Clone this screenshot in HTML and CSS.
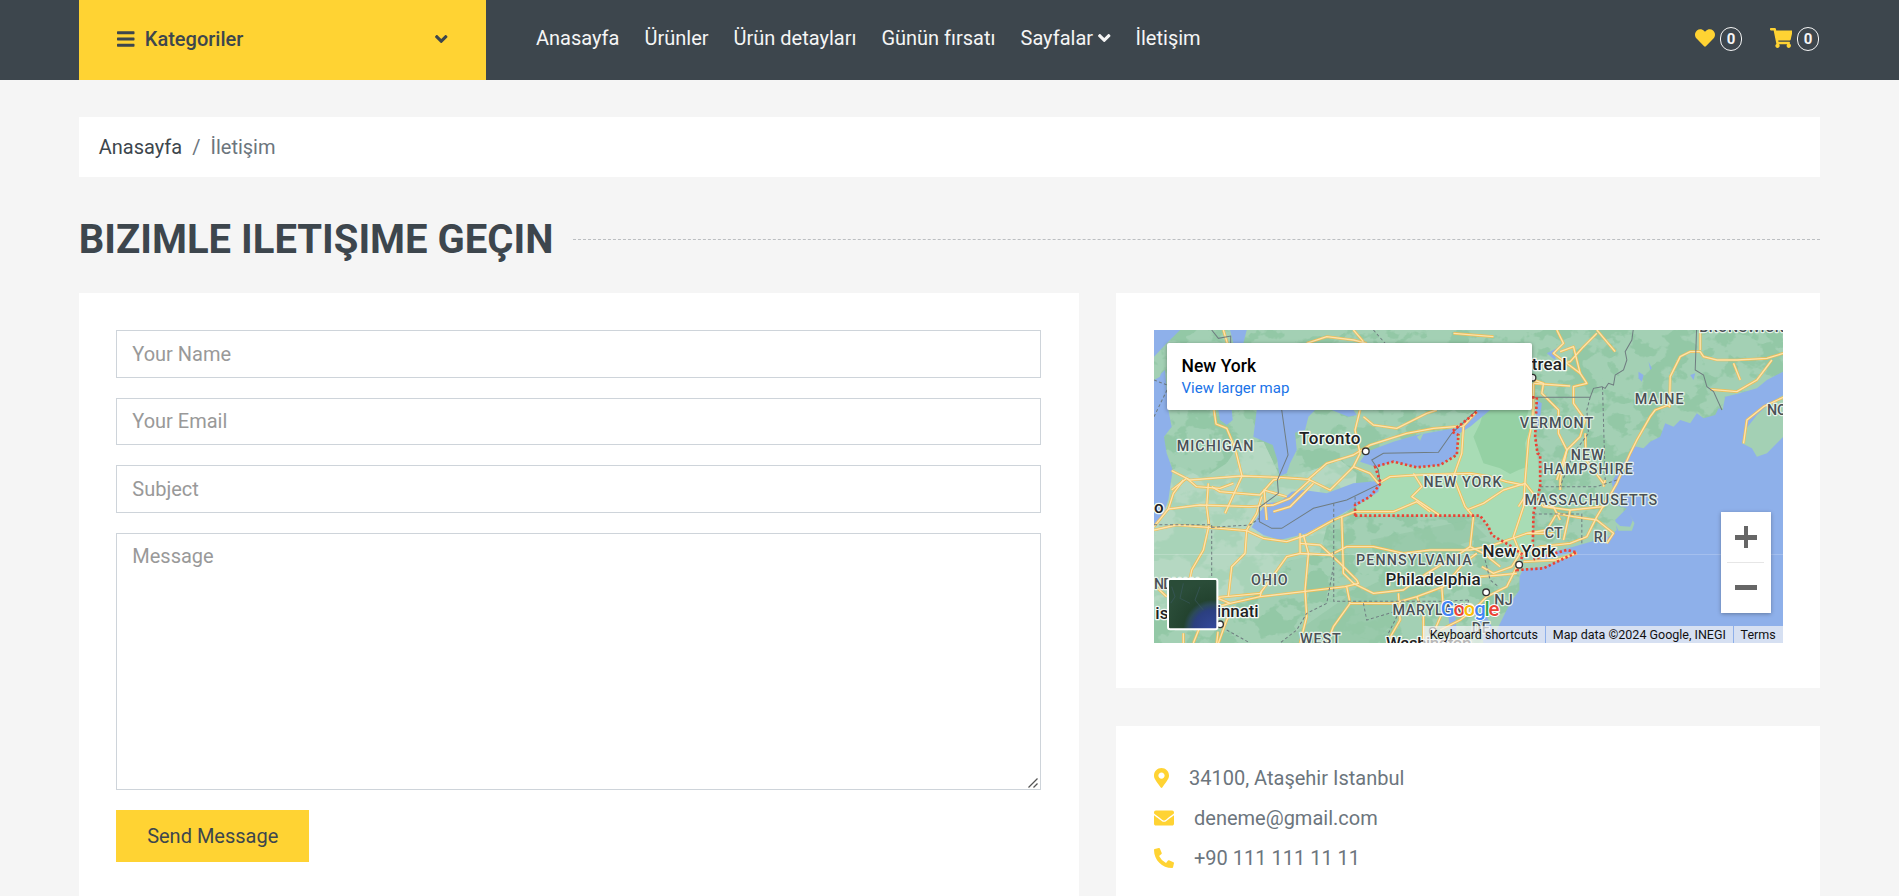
FILE: index.html
```html
<!DOCTYPE html>
<html lang="en">
<head>
<meta charset="utf-8">
<title>İletişim</title>
<link rel="stylesheet" href="styles.css">
</head>
<body>
<header class="topbar">
  <a class="categories">
    <span class="categories-label">
      <svg class="icon icon-bars" viewBox="0 0 448 512"><path d="M16 132h416c8.8 0 16-7.2 16-16V76c0-8.800-7.200-16-16-16H16C7.200 60 0 67.200 0 76v40c0 8.800 7.200 16 16 16zm0 160h416c8.800 0 16-7.200 16-16v-40c0-8.800-7.200-16-16-16H16c-8.800 0-16 7.200-16 16v40c0 8.800 7.200 16 16 16zm0 160h416c8.800 0 16-7.200 16-16v-40c0-8.800-7.200-16-16-16H16c-8.800 0-16 7.200-16 16v40c0 8.800 7.200 16 16 16z"/></svg>
      Kategoriler
    </span>
    <svg class="icon icon-angle" viewBox="0 0 320 512"><path d="M143 352.300L7 216.300c-9.400-9.400-9.400-24.600 0-33.900l22.600-22.600c9.400-9.400 24.600-9.400 33.900 0l96.400 96.400 96.400-96.400c9.400-9.400 24.600-9.400 33.900 0l22.600 22.600c9.400 9.400 9.400 24.600 0 33.900l-136 136c-9.200 9.400-24.400 9.400-33.800 0z"/></svg>
  </a>
  <nav class="menu">
    <a>Anasayfa</a>
    <a>Ürünler</a>
    <a>Ürün detayları</a>
    <a>Günün fırsatı</a>
    <a>Sayfalar <svg class="icon icon-angle-nav" viewBox="0 0 320 512"><path d="M143 352.300L7 216.300c-9.400-9.400-9.400-24.600 0-33.900l22.600-22.600c9.400-9.400 24.600-9.400 33.900 0l96.400 96.400 96.400-96.400c9.400-9.400 24.600-9.400 33.900 0l22.600 22.600c9.400 9.400 9.400 24.600 0 33.900l-136 136c-9.200 9.400-24.400 9.400-33.800 0z"/></svg></a>
    <a>İletişim</a>
  </nav>
  <div class="counters">
    <a class="counter">
      <svg class="icon icon-heart" viewBox="0 0 512 512"><path d="M462.300 62.600C407.500 15.900 326 24.300 275.700 76.200L256 96.500l-19.700-20.300C186.100 24.300 104.500 15.900 49.700 62.600c-62.800 53.600-66.100 149.800-9.900 207.900l193.500 199.800c12.500 12.900 32.800 12.900 45.300 0l193.500-199.800c56.300-58.100 53-154.300-9.800-207.900z"/></svg>
      <span class="count">0</span>
    </a>
    <a class="counter">
      <svg class="icon icon-cart" viewBox="0 0 576 512"><path d="M528.120 301.319l47.273-208C578.806 78.301 567.391 64 551.990 64H159.208l-9.166-44.810C147.758 8.021 137.930 0 126.529 0H24C10.745 0 0 10.745 0 24v16c0 13.255 10.745 24 24 24h69.883l70.248 343.435C147.325 417.100 136 435.222 136 456c0 30.928 25.072 56 56 56s56-25.072 56-56c0-15.674-6.447-29.835-16.824-40h209.647C430.447 426.165 424 440.326 424 456c0 30.928 25.072 56 56 56s56-25.072 56-56c0-22.172-12.888-41.332-31.579-50.405l5.517-24.276c3.413-15.018-8.002-29.319-23.403-29.319H218.117l-6.545-32h293.145c11.206 0 20.920-7.754 23.403-18.681z"/></svg>
      <span class="count">0</span>
    </a>
  </div>
</header>

<main class="page">
  <nav class="breadcrumb"><a>Anasayfa</a><span class="slash">/</span><span>İletişim</span></nav>
  <h2 class="title"><span>Bizimle Iletişime Geçin</span></h2>

  <div class="columns">
    <form class="card form">
      <input class="field" type="text" placeholder="Your Name">
      <input class="field" type="email" placeholder="Your Email">
      <input class="field" type="text" placeholder="Subject">
      <div class="message-box">
        <textarea class="field message" placeholder="Message"></textarea>
        <svg class="grip" viewBox="0 0 10 10"><path d="M.5 9.500L9.500.5M5.500 9.500L9.500 5.500"/></svg>
      </div>
      <button class="send" type="button">Send Message</button>
    </form>

    <div class="side">
      <section class="card map-card">
        <div class="map">
          <svg class="map-canvas" viewBox="42 30 1887 939" preserveAspectRatio="none">
            <defs>
              <filter id="hills" x="0" y="0" width="1" height="1" color-interpolation-filters="sRGB">
                <feTurbulence type="fractalNoise" baseFrequency="0.014 0.018" numOctaves="4" seed="8"/>
                <feColorMatrix values="0 0 0 0 .576  0 0 0 0 .784  0 0 0 0 .651  14 0 0 0 -6.900"/>
              </filter>
              <filter id="plains" x="0" y="0" width="1" height="1" color-interpolation-filters="sRGB">
                <feTurbulence type="fractalNoise" baseFrequency="0.010 0.014" numOctaves="4" seed="21"/>
                <feColorMatrix values="0 0 0 0 .710  0 0 0 0 .847  0 0 0 0 .760  0 14 0 0 -6.600"/>
              </filter>
              <clipPath id="lowland"><path d="M42 470L120 440L190 475L260 430L300 370L370 365L420 470L520 450L600 420L650 460L640 560L560 620L540 700L420 730L390 800L300 850L180 830L120 900L42 880z"/></clipPath>
              <radialGradient id="sat" cx=".9" cy="1" r=".95"><stop offset="0" stop-color="#33489a"/><stop offset=".4" stop-color="#2b3f80"/><stop offset=".52" stop-color="#2c4a58"/><stop offset=".62" stop-color="#23432f"/><stop offset="1" stop-color="#2a4c38"/></radialGradient>
              <g id="roads">
                <path d="M222 270L228 312L260 325L285 385L306 468L255 580"/>
                <path d="M95 452L140 475L150 480L306 468L420 472L505 478L560 430L640 405L690 375L800 340L880 325L970 318L1010 275"/>
                <path d="M95 510L140 475L170 500L240 505L280 490"/>
                <path d="M130 480L100 520L85 567L42 620"/>
                <path d="M85 567L180 555L330 560L400 555L450 535L510 480"/>
                <path d="M205 490L200 560L207 615L190 690L155 750L150 775"/>
                <path d="M215 500L240 515L300 520L360 525L400 480L420 475"/>
                <path d="M365 530L350 580L320 630L315 700L275 740L265 830"/>
                <path d="M42 630L110 615L205 622L320 632L370 655L440 665L500 645L580 600L645 575L760 575L830 545L870 575"/>
                <path d="M400 575L450 560L500 510L520 490"/>
                <path d="M505 478L570 510L600 480L640 440L660 400L645 330L660 270"/>
                <path d="M670 290L700 315L770 325L860 280L890 270"/>
                <path d="M640 440L690 460L715 490L750 470L830 465L990 460L1050 470L1100 485L1150 495"/>
                <path d="M820 460L845 500L815 530L860 560L900 587"/>
                <path d="M970 320L965 400L940 470L975 560L1000 590"/>
                <path d="M480 640L480 700L440 710L390 780L360 820L235 832"/>
                <path d="M480 700L570 705L620 680L700 680L790 700L870 690L990 690L1060 675L1160 640L1240 640"/>
                <path d="M480 670L540 675L600 730L650 780L655 790L615 800L490 815L360 830L270 850L234 835"/>
                <path d="M490 645L505 700L495 810L500 890L480 969"/>
                <path d="M605 590L610 760L640 790L700 820L790 810L860 760L960 700L990 680"/>
                <path d="M620 800L630 850L580 920L560 969"/>
                <path d="M630 850L760 850L830 830L910 800L970 730L1010 700"/>
                <path d="M775 820L780 900L740 969M830 830L850 880L850 969M905 800L910 870L880 940"/>
                <path d="M270 850L200 870L160 969M360 830L365 812M234 935L230 969M130 940L130 969M42 795L80 830"/>
                <path d="M285 860L260 900L235 970"/>
                <path d="M380 600L372 510L440 530"/>
                <path d="M1130 740L1100 800L1040 830L1000 870L960 900L900 930"/>
                <path d="M1025 740L1060 760L1115 740L1140 700L1120 650L1150 560L1155 480L1165 360L1178 300L1180 190"/>
                <path d="M1000 590L990 680L1030 700L1080 740"/>
                <path d="M980 570L1030 550L1090 510L1155 490L1210 560L1290 570L1390 560L1430 490L1470 400L1490 360L1530 290L1545 270L1585 255L1588 260L1590 170L1620 110L1650 95L1680 95L1690 110L1730 120L1790 120L1880 115L1929 100"/>
                <path d="M1160 640L1220 630L1250 580L1300 590L1370 600L1420 640L1400 670"/>
                <path d="M1140 705L1200 680L1290 670L1340 650L1370 590L1400 540"/>
                <path d="M1290 570L1270 660M1210 560L1240 560L1260 600"/>
                <path d="M1250 480L1280 390L1255 340L1255 270L1205 220L1210 190L1180 180"/>
                <path d="M1280 390L1320 350L1335 300L1300 250L1300 200L1340 190L1320 160L1240 100L1270 70L1250 30"/>
                <path d="M1180 190L1290 198M1210 140L1290 125L1330 80L1370 40M1260 95L1300 80L1320 160M1370 30L1425 95"/>
                <path d="M1280 390L1260 480L1260 510M1335 340L1338 420L1390 490"/>
                <path d="M1680 30L1680 90M1710 208L1790 215L1850 180L1895 120M1780 130L1800 180"/>
                <path d="M1929 232L1870 260L1820 300L1810 370"/>
                <path d="M1150 725L1250 720L1310 700"/>
                <path d="M500 70L560 50L640 60L680 70M640 30L670 65M250 30L262 70M940 40L1060 50"/>
                <path d="M1135 560L1160 520M1130 760L1080 765L1020 770M1390 500L1395 480"/>
              </g>
            </defs>

            <rect x="42" y="30" width="1887" height="939" fill="#a3d0b4"/>
            <rect x="42" y="30" width="1887" height="939" filter="url(#hills)"/>
            <g clip-path="url(#lowland)">
              <rect x="42" y="360" width="620" height="560" fill="#a8d3b8"/>
              <rect x="42" y="360" width="620" height="560" filter="url(#plains)"/>
            </g>
            <path d="M690 660L990 600L1040 650L900 690L700 700zM420 969L620 830L850 720L900 770L700 969z" fill="#94c8a7" opacity=".7"/>
            <path d="M645 587V555L690 530L720 490L705 440L760 425L830 442L900 435L950 405L955 345L1010 290L1060 240L1190 232L1185 350L1190 400L1200 480L1178 580V700L1140 705L1060 650L1045 620L1020 587z" fill="#a8dcb5"/>
            <path d="M1040 240L1170 250L1160 290L1168 330L1155 370L1162 440L1135 450L1110 462L1080 445L1030 430L1015 390L1000 350L1020 310z" fill="#95d1a4"/>

            <g fill="#8eb0ea">
              <path d="M42 30H120L75 75L42 110zM42 180L75 150L85 270L95 320L72 350L80 400L98 450L85 540L70 580L42 615z"/>
              <path d="M235 270H275L278 300L260 315L240 300zM350 270H525L505 290L495 330L465 338L470 390L450 430L440 460L418 468L412 420L398 375L340 350z"/>
              <path d="M575 270H640L650 285L625 290zM270 30H320L310 70H280z"/>
              <path d="M660 425L680 395L760 365L830 345L960 322L1010 270H1050L990 320L950 345L952 400L900 435L830 442L760 424L710 442z"/>
              <path d="M335 622L362 575L375 550L420 545L455 515L490 510L560 520L640 490L722 482L715 515L690 532L645 560L590 590L500 640L420 660L370 645z"/>
              <path d="M355 575L370 590L425 570L440 550L400 560z"/>
              <path d="M1929 155L1880 180L1850 205L1790 222L1755 230L1750 255L1748 270L1735 265L1725 285L1690 295L1670 280L1650 310L1620 300L1600 320L1575 310L1560 350L1530 365L1510 385L1480 378L1455 420L1430 460L1415 485L1420 520L1410 545L1425 555L1460 565L1425 600L1430 630L1405 650L1370 660L1300 680L1240 695L1150 745L1138 770V810L1110 850L1080 910L1050 969H1929z"/>
              <path d="M925 890L945 880L950 940L930 930zM1015 895L1035 880L1070 950L1060 969L1030 969zM1190 240L1205 250L1195 340L1188 300zM840 350L870 340L860 365z"/>
              <path d="M1495 155L1510 165L1505 185L1495 175zM1525 125L1535 145L1530 150zM1650 165L1665 160L1660 180zM1220 100L1250 85L1245 120z"/>
            </g>
            <g fill="#a3d0b4">
              <path d="M1929 225L1890 250L1850 285L1815 330L1805 370L1835 385L1850 410L1880 400L1929 350z"/>
              <path d="M1420 600L1435 632L1475 632L1483 610L1465 580L1478 600L1470 620L1440 618z"/>
              <path d="M1140 750L1150 730L1230 715L1310 692L1290 710L1210 740z"/>
              <path d="M42 140L70 130L60 170L42 180zM830 350L850 340L840 362z"/>
            </g>

            <use href="#roads" class="road-case"/>
            <use href="#roads" class="road-core"/>

            <g class="border">
              <path d="M215 30L235 55L272 48V70M425 270L444 405L412 480L415 520L358 562V605L395 625H425L520 565L620 540L722 490M720 490L715 450L695 420L730 400L895 397L935 340L1010 270"/>
              <path d="M1176 232H1350L1360 205L1385 200L1395 205L1405 190L1420 195L1425 165L1450 150L1460 120L1455 95L1475 60L1479 30M1669 30L1665 150L1690 165L1700 200L1720 215L1745 270"/>
            </g>
            <g class="border dashed">
              <path d="M42 614H210M215 615V775M215 622L330 615L358 595M581 550V844H900L990 840M645 587V530M42 180L81 195M42 290L81 210M700 30L735 70"/>
              <path d="M580 740L560 850L500 880L470 930L420 969M260 930L330 969M670 850L680 900L780 870L740 950M1350 232L1340 270L1345 340L1300 400L1260 500M1387 200L1395 480M1200 500H1370L1430 480M1180 582H1325V670M1035 720L1050 780L1075 800M985 840L980 880"/>
            </g>
            <g class="state-line">
              <path d="M645 587V555L690 530L722 490L705 440L760 425L830 442L900 435L950 405L955 345L935 335L1010 275"/>
              <path d="M645 587H1020L1045 620L1055 645L1115 680L1148 705L1130 750L1210 745L1310 697L1280 690L1180 718M1176 232H1190L1185 350L1192 400L1200 405L1200 500L1180 580L1177 715"/>
            </g>
            <path d="M42 703H1929" stroke="#fff" stroke-width="2" opacity=".35"/>

            <g class="cities-dot"><circle cx="677" cy="394" r="10"/><circle cx="1177" cy="173" r="10"/><circle cx="1137" cy="734" r="10"/><circle cx="1038" cy="817" r="10"/><circle cx="240" cy="913" r="10"/><circle cx="878" cy="933" r="10"/></g>
            <g class="state-name">
              <text x="110" y="394" textLength="230">MICHIGAN</text>
              <text x="850" y="502" textLength="234">NEW YORK</text>
              <text x="1139" y="325" textLength="220">VERMONT</text>
              <text x="1484" y="251" textLength="146">MAINE</text>
              <text x="1292" y="421" textLength="98">NEW</text>
              <text x="1209" y="463" textLength="269">HAMPSHIRE</text>
              <text x="1153" y="555" textLength="398">MASSACHUSETTS</text>
              <text x="1214" y="653" textLength="54">CT</text>
              <text x="1361" y="665" textLength="40">RI</text>
              <text x="648" y="735" textLength="347">PENNSYLVANIA</text>
              <text x="333" y="796" textLength="110">OHIO</text>
              <text x="42" y="808" textLength="145">NDIANA</text>
              <text x="757" y="885" textLength="245">MARYLAND</text>
              <text x="1062" y="856" textLength="56">NJ</text>
              <text x="995" y="939" textLength="54">DE</text>
              <text x="480" y="971" textLength="122">WEST</text>
              <text x="1677" y="37" textLength="254">BRUNSWICK</text>
              <text x="1880" y="286">NOVA</text>
            </g>
            <g class="city-name">
              <text x="477" y="372" textLength="184">Toronto</text>
              <text x="1175" y="150" textLength="104">treal</text>
              <text x="1027" y="711" textLength="221">New York</text>
              <text x="736" y="796" textLength="286">Philadelphia</text>
              <text x="230" y="892" textLength="126">innati</text>
              <text x="46" y="897">is</text>
              <text x="42" y="580">o</text>
              <text x="738" y="988" textLength="256">Washington</text>
            </g>
            <text class="google" x="902" y="889" textLength="176"><tspan fill="#4285f4">G</tspan><tspan fill="#ea4335">o</tspan><tspan fill="#fbbc05">o</tspan><tspan fill="#4285f4">g</tspan><tspan fill="#34a853">l</tspan><tspan fill="#ea4335">e</tspan></text>
            <g class="satellite">
              <rect x="84" y="777" width="148" height="151" rx="6" fill="url(#sat)" stroke="#fff" stroke-width="6"/>
              <path d="M95 800L105 830L92 850M130 790L120 835L150 850M180 800L165 840L190 870" fill="none" stroke="#3c5a63" stroke-width="3" opacity=".6"/>
            </g>
          </svg>
          <div class="place"><strong>New York</strong><a>View larger map</a></div>
          <div class="zoom"><i class="plus"></i><i class="minus"></i></div>
          <div class="legal"><span>Keyboard shortcuts</span><span>Map data ©2024 Google, INEGI</span><span>Terms</span></div>
        </div>
      </section>

      <section class="card contact">
        <p><svg class="icon icon-pin" viewBox="0 0 384 512"><path d="M172.268 501.670C26.970 291.031 0 269.413 0 192 0 85.961 85.961 0 192 0s192 85.961 192 192c0 77.413-26.970 99.031-172.268 309.670-9.535 13.774-29.930 13.773-39.464 0zM192 272c44.183 0 80-35.817 80-80s-35.817-80-80-80-80 35.817-80 80 35.817 80 80 80z"/></svg>34100, Ataşehir Istanbul</p>
        <p><svg class="icon icon-wide" viewBox="0 0 512 512"><path d="M502.300 190.800c3.900-3.100 9.700-.2 9.700 4.700V400c0 26.500-21.500 48-48 48H48c-26.500 0-48-21.500-48-48V195.600c0-5 5.700-7.800 9.700-4.700 22.400 17.400 52.100 39.500 154.100 113.600 21.100 15.400 56.700 47.800 92.200 47.600 35.700.3 72-32.800 92.300-47.600 102-74.100 131.600-96.300 154-113.700zM256 320c23.200.4 56.600-29.200 73.400-41.400 132.700-96.300 142.800-104.700 173.400-128.700 5.800-4.500 9.200-11.500 9.200-18.900v-19c0-26.500-21.500-48-48-48H48c-26.500 0-48 21.500-48 48v19c0 7.400 3.400 14.300 9.200 18.900 30.600 23.900 40.700 32.400 173.400 128.700 16.800 12.200 50.200 41.800 73.400 41.400z"/></svg>deneme@gmail.com</p>
        <p><svg class="icon icon-wide" viewBox="0 0 512 512"><path d="M497.390 361.800l-112-48a24 24 0 0 0-28 6.900l-49.600 60.600A370.660 370.660 0 0 1 130.600 204.110l60.600-49.600a23.940 23.940 0 0 0 6.900-28l-48-112A24.160 24.160 0 0 0 122.600.61l-104 24A24 24 0 0 0 0 48c0 256.500 207.900 464 464 464a24 24 0 0 0 23.400-18.600l24-104a24.290 24.290 0 0 0-14.010-27.600z"/></svg>+90 111 111 11 11</p>
      </section>
    </div>
  </div>
</main>
</body>
</html>
```
FILE: styles.css
```css
* { box-sizing: border-box; }

html { height: 100%; overflow: hidden; }

body {
  display: flex;
  flex-direction: column;
  margin: 0;
  height: 100%;
  overflow: hidden;
  background: #f5f5f5;
  color: #6c757d;
  font: 400 20px/30px Roboto, "Liberation Sans", sans-serif;
}

.icon { display: block; flex: none; fill: currentColor; }

/* Top bar */
.topbar {
  display: flex;
  flex: none;
  height: 80px;
  padding: 0 78.75px;
  background: #3d464d;
}

.categories {
  display: flex;
  align-items: center;
  justify-content: space-between;
  width: 407.25px;
  padding: 0 38.5px 2px;
  background: #ffd333;
  color: #3d464d;
  font-weight: 500;
}

.categories-label { display: flex; align-items: center; gap: 10px; line-height: 24px; }
.icon-bars { width: 17.5px; height: 20px; }
.categories .icon-angle { width: 12.5px; height: 20px; }

.menu { display: flex; flex: 1; align-items: center; padding: 0 0 4px 37.5px; color: #f5f5f5; }
.menu a { display: flex; align-items: center; padding: 0 12.5px; }
.icon-angle-nav { width: 12.5px; height: 20px; margin-left: 5px; }

.counters { display: flex; align-items: center; gap: 27.5px; padding: 0 1.25px 2px 0; }
.counter { display: flex; align-items: center; gap: 5px; color: #ffd333; }
.icon-heart { width: 20px; height: 20px; margin-bottom: 3px; }
.icon-cart { width: 22.5px; height: 20px; margin-bottom: 3px; }

.count {
  width: 22px;
  height: 24px;
  border: 1px solid #f5f5f5;
  border-radius: 12px;
  color: #f5f5f5;
  font-size: 15px;
  font-weight: 700;
  line-height: 23px;
  text-align: center;
}

/* Page */
.page { display: flex; flex: 1; flex-direction: column; min-height: 0; padding: 37px 78.75px 0; }

.breadcrumb { display: flex; flex: none; height: 60px; padding: 15px 20px; background: #fff; }
.breadcrumb a { color: #3d464d; }
.slash { padding: 0 10px; }

.title {
  display: flex;
  align-items: center;
  gap: 20px;
  margin: 38px 0 30px;
  color: #3d464d;
  font-size: 40px;
  font-weight: 700;
  line-height: 48px;
  text-transform: uppercase;
}
.title span { height: 48px; line-height: 50px; }
.title::after { content: ""; flex: 1; border-top: 1px dashed #bcbfc2; }

.columns { display: flex; flex: 1; gap: 37.5px; min-height: 0; }
.card { background: #fff; padding: 37px 37.5px; }

/* Form */
.form { display: flex; flex-direction: column; align-items: flex-start; gap: 20px; width: 999.75px; padding-bottom: 0; }

.field {
  display: block;
  flex: none;
  width: 100%;
  height: 47.5px;
  margin: 0;
  padding: 7.5px 15px;
  border: 1px solid #ced4da;
  border-radius: 0;
  background: #fff;
  font: inherit;
}
.field::placeholder { color: #999; opacity: 1; }
.message-box { position: relative; flex: none; width: 100%; }
.message { height: 257.5px; resize: none; }
.grip { position: absolute; right: 3px; bottom: 2px; width: 10px; height: 10px; fill: none; stroke: #555; stroke-width: 1.3; }

.send {
  flex: none;
  width: 193px;
  height: 52px;
  padding: 0;
  border: 0;
  background: #ffd333;
  color: #3d464d;
  font: inherit;
}

/* Right column */
.side { display: flex; flex: 1; flex-direction: column; gap: 38px; min-width: 0; }
.map-card { flex: none; padding-bottom: 45px; }
.map { position: relative; height: 313px; overflow: hidden; }
.map-canvas { display: block; width: 100%; height: 100%; }

.map-canvas text { font-family: Roboto, sans-serif; paint-order: stroke; stroke-linejoin: round; }
.road-case { fill: none; stroke: #f2bd52; stroke-width: 8; stroke-linejoin: round; }
.road-core { fill: none; stroke: #fbe3ae; stroke-width: 4; stroke-linejoin: round; }
.border { fill: none; stroke: #6f7c80; stroke-width: 3; }
.border.dashed { stroke-dasharray: 9 7; }
.state-line { fill: none; stroke: #ea4335; stroke-width: 8; stroke-dasharray: 7 7; }
.cities-dot { fill: #fff; stroke: #333; stroke-width: 4; }
.state-name { fill: #4a5056; stroke: #e6f3ea; stroke-width: 7; font-size: 43px; font-weight: 500; }
.city-name { fill: #1f2224; stroke: #f3faf5; stroke-width: 8; font-size: 51px; font-weight: 500; }
.google { font-size: 61px; font-weight: 500; stroke: #fff; stroke-width: 6; }

.place {
  position: absolute;
  top: 13px;
  left: 13px;
  display: flex;
  flex-direction: column;
  width: 365px;
  height: 67px;
  padding: 12px 15px;
  border-radius: 2px;
  background: #fff;
  box-shadow: 0 1px 4px rgba(0, 0, 0, .35);
}
.place strong { color: #000; font-size: 17.5px; font-weight: 500; line-height: 22px; }
.place a { color: #1a73e8; font-size: 15px; line-height: 22px; }

.zoom {
  position: absolute;
  right: 12px;
  bottom: 30px;
  display: grid;
  grid-template-rows: 1fr 1fr;
  place-items: center;
  width: 50px;
  height: 101px;
  background: linear-gradient(#e6e6e6, #e6e6e6) center / 37px 1px no-repeat #fff;
  box-shadow: 0 1px 4px rgba(0, 0, 0, .3);
}
.plus, .minus { width: 22px; height: 22px; background: linear-gradient(#666, #666) center / 22px 5px no-repeat; }
.plus { background: linear-gradient(#666, #666) center / 22px 5px no-repeat, linear-gradient(#666, #666) center / 4px 22px no-repeat; }

.legal {
  position: absolute;
  right: 0;
  bottom: 0;
  display: flex;
  gap: 1px;
  color: #111;
  font-size: 12.5px;
  line-height: 17px;
  white-space: nowrap;
}
.legal span { padding: 0 7px 0 6.75px; background: rgba(245, 245, 245, .7); }

/* Contact list */
.contact { flex: 1; }
.contact p { display: flex; align-items: center; gap: 20.5px; margin: 0 0 10px; }
.contact .icon { color: #ffd333; }
.icon-pin { width: 15px; height: 20px; }
.icon-wide { width: 20px; height: 20px; }
```
